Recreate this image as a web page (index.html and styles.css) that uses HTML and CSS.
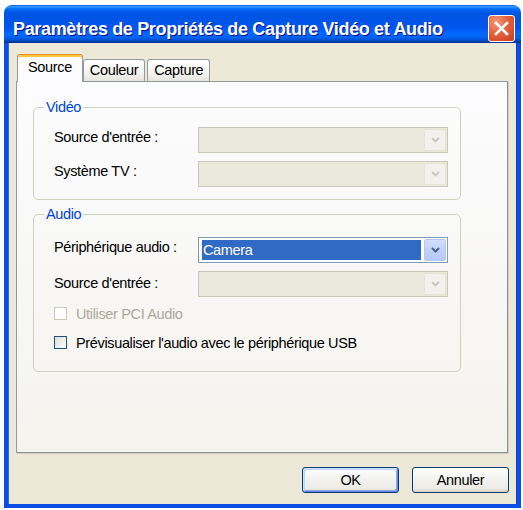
FILE: index.html
```html
<!DOCTYPE html>
<html lang="fr">
<head>
<meta charset="utf-8">
<title>Paramètres de Propriétés de Capture Vidéo et Audio</title>
<link rel="stylesheet" href="styles.css">
</head>
<body>
<div class="window">
  <div class="titlebar">
    <span class="title">Paramètres de Propriétés de Capture Vidéo et Audio</span>
    <div class="close">
      <svg width="25" height="25" viewBox="0 0 25 25"><path d="M7 7 L18 18 M18 7 L7 18" stroke="#fff" stroke-width="2.6" stroke-linecap="square" fill="none"/></svg>
    </div>
  </div>
  <div class="body">
    <div class="tabs">
      <div class="tab selected">Source</div>
      <div class="tab">Couleur</div>
      <div class="tab tab-last">Capture</div>
    </div>
    <div class="panel">
      <fieldset class="group group-video">
        <legend>Vidéo</legend>
        <div class="row">
          <span class="label label-up">Source d'entrée :</span>
          <div class="combo disabled">
            <div class="value"></div>
            <div class="arrow"><svg width="9" height="6" viewBox="0 0 9 6"><path d="M1 1 L4.5 4.5 L8 1" fill="none" stroke-width="1.8"/></svg></div>
          </div>
        </div>
        <div class="row">
          <span class="label label-up">Système TV :</span>
          <div class="combo disabled">
            <div class="value"></div>
            <div class="arrow"><svg width="9" height="6" viewBox="0 0 9 6"><path d="M1 1 L4.5 4.5 L8 1" fill="none" stroke-width="1.8"/></svg></div>
          </div>
        </div>
      </fieldset>
      <fieldset class="group group-audio">
        <legend>Audio</legend>
        <div class="row">
          <span class="label label-up">Périphérique audio :</span>
          <div class="combo">
            <div class="value selected-value">Camera</div>
            <div class="arrow"><svg width="9" height="6" viewBox="0 0 9 6"><path d="M1 1 L4.5 4.5 L8 1" fill="none" stroke-width="2"/></svg></div>
          </div>
        </div>
        <div class="row row-audio2">
          <span class="label label-slight">Source d'entrée :</span>
          <div class="combo disabled">
            <div class="value"></div>
            <div class="arrow"><svg width="9" height="6" viewBox="0 0 9 6"><path d="M1 1 L4.5 4.5 L8 1" fill="none" stroke-width="1.8"/></svg></div>
          </div>
        </div>
        <div class="check check-first disabled-check">
          <span class="box"></span>
          <span>Utiliser PCI Audio</span>
        </div>
        <div class="check check-second">
          <span class="box"></span>
          <span>Prévisualiser l'audio avec le périphérique USB</span>
        </div>
      </fieldset>
    </div>
    <div class="buttons">
      <div class="btn btn-default">OK</div>
      <div class="btn">Annuler</div>
    </div>
  </div>
</div>
</body>
</html>
```
FILE: styles.css
```css
* { box-sizing: border-box; }

body {
  margin: 0;
  background: #ffffff;
  font-family: "Liberation Sans", Arial, sans-serif;
  font-size: 14.5px;
  letter-spacing: -0.35px;
  color: #000;
}

.window {
  margin: 5px 0 0 4px;
  width: 517px;
  height: 503px;
  display: flex;
  flex-direction: column;
  border-radius: 8px 8px 0 0;
  overflow: hidden;
}

.titlebar {
  flex: none;
  height: 38px;
  display: flex;
  align-items: center;
  padding: 9px 6px 1px 9px;
  background: linear-gradient(to bottom,
    #0058ee 0%, #3593ff 4%, #288eff 6%, #127dff 8%, #036ffc 10%,
    #0262ee 14%, #0057e5 20%, #0054e3 24%, #0055eb 56%, #005bf5 66%,
    #026afe 76%, #0062ef 86%, #0052d6 92%, #0040ab 96%, #003092 100%);
}

.title {
  flex: 1;
  color: #fff;
  font-weight: bold;
  font-size: 18px;
  letter-spacing: -0.35px;
  padding-top: 2px;
  text-shadow: 1px 1px 0 #0f1089;
  white-space: nowrap;
}

.close {
  width: 27px;
  height: 27px;
  border: 1px solid #fff;
  border-radius: 3px;
  background: radial-gradient(circle at 30% 25%, #f09a7c 0%, #e5603b 45%, #c9401c 100%);
  display: flex;
  align-items: center;
  justify-content: center;
}

.body {
  flex: 1;
  display: flex;
  flex-direction: column;
  background: #ece9d8;
  border: 4px solid #0a4ee4;
  border-top: 0;
  box-shadow: inset 1px 0 0 #2a6ef0, inset -1px 0 0 #0844c8;
  padding: 11px 9px 0 8px;
}

.tabs {
  display: flex;
  align-items: flex-end;
  height: 27px;
  padding-left: 1px;
}

.tab {
  height: 22px;
  padding: 0 6px;
  border: 1px solid #919b9c;
  border-bottom: 0;
  border-radius: 3px 3px 0 0;
  background: linear-gradient(to bottom, #ffffff, #f4f4f0 60%, #e6e5de);
  line-height: 21px;
}

.tab-last { margin-left: 2px; }

.tab.selected {
  position: relative;
  z-index: 1;
  height: 28px;
  margin-bottom: -1px;
  padding: 0 10px;
  background: #fcfcfe;
  border-top: 1px solid #e68b2c;
  box-shadow: inset 0 2px 0 #ffc83c;
  line-height: 25px;
}

.panel {
  height: 372px;
  border: 1px solid #919b9c;
  border-right-color: #8a9496;
  border-bottom-color: #8a9496;
  box-shadow: 1px 1px 0 #d0cdbd;
  background: linear-gradient(to bottom, #fcfcfe, #f4f3ee);
  padding-top: 1px;
}

.group {
  display: block;
  margin: 16px 46px 0 16px;
  border: 1px solid #d0d0bf;
  border-radius: 5px;
  padding: 12px 12px 12px 20px;
  min-width: 0;
}

.group legend {
  color: #0046d5;
  line-height: 16px;
  padding: 0 2px;
  margin-left: -10px;
}

.group-audio {
  margin-top: 6px;
  padding-top: 15px;
  padding-bottom: 20px;
}

.row {
  display: flex;
  align-items: center;
  height: 26px;
}

.row + .row { margin-top: 8px; }
.row-audio2 { margin-top: 9px; }

.label {
  width: 144px;
  flex: none;
}

.label-up { padding-bottom: 7px; }
.label-slight { padding-bottom: 2px; }

.combo {
  width: 251px;
  height: 26px;
  border: 1px solid #7f9db9;
  background: #fff;
  padding: 1px;
  display: flex;
}

.value {
  flex: 1;
  margin: 1px 3px 1px 2px;
  padding-left: 1px;
  line-height: 20px;
}

.selected-value {
  background: #316ac5;
  color: #fff;
}

.arrow {
  width: 22px;
  flex: none;
  border: 1px solid #b5c8f4;
  border-radius: 2px;
  background: linear-gradient(to bottom, #d3defd, #c1d1fb 50%, #b7c9f7);
  display: flex;
  align-items: center;
  justify-content: center;
}

.arrow path { stroke: #4d6185; }

.combo.disabled {
  border-color: #c9c7ba;
  background: #ebe9dc;
}

.combo.disabled .arrow {
  border-color: #e6e4d9;
  background: #f2f1ec;
}

.combo.disabled .arrow path { stroke: #c9c7ba; }

.check {
  display: flex;
  align-items: center;
  gap: 9px;
  height: 17px;
}

.check-first { margin-top: 8px; }
.check-second { margin-top: 12px; }

.box {
  width: 13px;
  height: 13px;
  flex: none;
  border: 1px solid #1c5180;
  background: linear-gradient(135deg, #dcdcd7, #ffffff);
}

.disabled-check { color: #aca899; }
.disabled-check .box {
  border-color: #cac8bb;
  background: #ffffff;
}

.buttons {
  display: flex;
  justify-content: flex-end;
  gap: 13px;
  margin-top: 14px;
  margin-right: -1px;
}

.btn {
  width: 97px;
  height: 26px;
  border: 1px solid #003c74;
  border-radius: 3px;
  background: linear-gradient(to bottom, #ffffff, #f3f3ef 40%, #ecebe6 85%, #d6d0c5);
  display: flex;
  align-items: center;
  justify-content: center;
}

.btn-default {
  box-shadow: inset 1px 1px 0 #cee7ff, inset -1px -1px 0 #6982ee, inset 2px 2px 0 #bcd4f6, inset -2px -2px 0 #89ade4;
}
```
